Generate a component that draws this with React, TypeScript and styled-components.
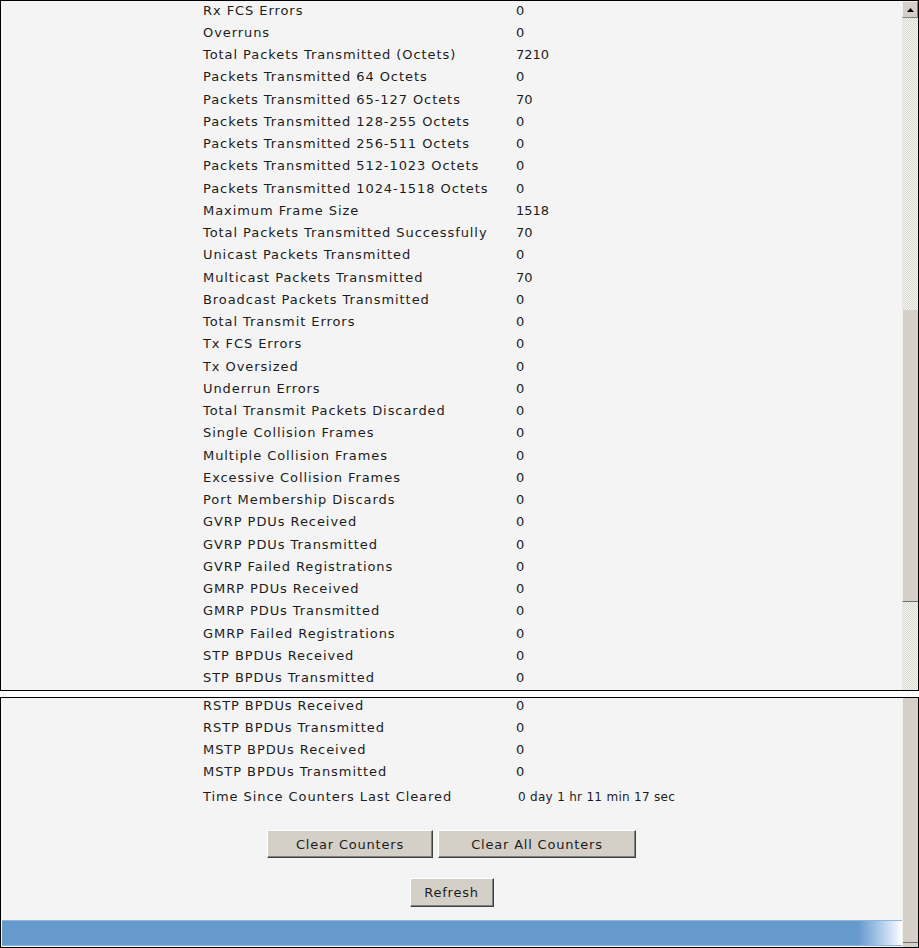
import styled, { createGlobalStyle } from "styled-components";

const GlobalStyle = createGlobalStyle`
  html, body {
    margin: 0;
    padding: 0;
    background: #ffffff;
  }
  body {
    font-family: "DejaVu Sans", Verdana, sans-serif;
    font-size: 13px;
    color: #1c1c1c;
  }
`;

const Page = styled.div`
  width: 919px;
  height: 948px;
  display: flex;
  flex-direction: column;
  gap: 6px;
  overflow: hidden;
`;

const Frame = styled.div<{ $height: number }>`
  height: ${(p) => p.$height}px;
  box-sizing: border-box;
  border: 1px solid #000;
  background: #f4f4f4;
  display: flex;
  flex-direction: row;
  overflow: hidden;
`;

const Viewport = styled.div<{ $offset: number }>`
  flex: 1;
  overflow: hidden;
  display: flex;
  flex-direction: column;
  & > :first-child {
    margin-top: ${(p) => p.$offset}px;
  }
`;

const Row = styled.div<{ $h?: number }>`
  display: grid;
  grid-template-columns: 313px 1fr;
  padding-left: 202px;
  height: ${(p) => p.$h ?? 22.25}px;
  flex-shrink: 0;
  align-items: center;
  white-space: nowrap;
`;

const Label = styled.span`
  font-size: 13px;
  letter-spacing: 0.93px;
`;

const Value = styled.span<{ $small?: boolean }>`
  font-size: ${(p) => (p.$small ? "12px" : "13px")};
  letter-spacing: ${(p) => (p.$small ? "0.3px" : "0")};
  padding-left: ${(p) => (p.$small ? "2px" : "0")};
`;

const ScrollTrack = styled.div`
  width: 16px;
  flex-shrink: 0;
  display: flex;
  flex-direction: column;
  background: repeating-conic-gradient(#d9d6d0 0 25%, #f7f7f5 0 50%) 0 0 / 2px 2px;
`;

const ArrowButton = styled.div`
  height: 17px;
  box-sizing: border-box;
  background: #d4d0c8;
  border-top: 1px solid #f0efeb;
  border-left: 1px solid #f0efeb;
  border-right: 1px solid #808080;
  border-bottom: 1px solid #808080;
  display: flex;
  align-items: center;
  justify-content: center;
`;

const Thumb = styled.div<{ $top: number; $height: number }>`
  margin-top: ${(p) => p.$top}px;
  height: ${(p) => p.$height}px;
  box-sizing: border-box;
  background: #d4d0c8;
  border-left: 1px solid #f0efeb;
  border-bottom: 1px solid #6f6f6f;
`;

const GrayColumn = styled.div`
  width: 16px;
  flex-shrink: 0;
  box-sizing: border-box;
  background: #d4d0c8;
  border-left: 1px solid #f0efeb;
  display: flex;
  flex-direction: column;
`;

const ColumnEnd = styled.div`
  margin-top: auto;
  margin-bottom: 4px;
  height: 1px;
  background: #6f6f6f;
`;

const ButtonRow = styled.div<{ $top: number }>`
  display: flex;
  justify-content: center;
  gap: 5px;
  margin-top: ${(p) => p.$top}px;
  flex-shrink: 0;
`;

const Button = styled.button<{ $w: number; $h?: number }>`
  width: ${(p) => p.$w}px;
  height: ${(p) => p.$h ?? 28}px;
  font-family: "DejaVu Sans", Verdana, sans-serif;
  font-size: 13px;
  letter-spacing: 0.8px;
  color: #1c1c1c;
  background: #d4d0c8;
  border-top: 1px solid #ffffff;
  border-left: 1px solid #ffffff;
  border-right: 1px solid #404040;
  border-bottom: 1px solid #404040;
  box-shadow: inset -1px -1px 0 #808080;
  padding: 0;
  cursor: pointer;
`;

const BlueBar = styled.div`
  margin-top: auto;
  margin-bottom: 1px;
  margin-left: 1px;
  height: 26px;
  flex-shrink: 0;
  box-sizing: border-box;
  border-top: 1px solid #8db5de;
  border-bottom: 1px solid #8db5de;
  background: linear-gradient(
    to right,
    #6699cc 0,
    #6699cc calc(100% - 44px),
    #9dc0e4 calc(100% - 26px),
    #e6f0fa calc(100% - 6px),
    #ffffff 100%
  );
`;

const topRows: [string, string][] = [
  ["Rx FCS Errors", "0"],
  ["Overruns", "0"],
  ["Total Packets Transmitted (Octets)", "7210"],
  ["Packets Transmitted 64 Octets", "0"],
  ["Packets Transmitted 65-127 Octets", "70"],
  ["Packets Transmitted 128-255 Octets", "0"],
  ["Packets Transmitted 256-511 Octets", "0"],
  ["Packets Transmitted 512-1023 Octets", "0"],
  ["Packets Transmitted 1024-1518 Octets", "0"],
  ["Maximum Frame Size", "1518"],
  ["Total Packets Transmitted Successfully", "70"],
  ["Unicast Packets Transmitted", "0"],
  ["Multicast Packets Transmitted", "70"],
  ["Broadcast Packets Transmitted", "0"],
  ["Total Transmit Errors", "0"],
  ["Tx FCS Errors", "0"],
  ["Tx Oversized", "0"],
  ["Underrun Errors", "0"],
  ["Total Transmit Packets Discarded", "0"],
  ["Single Collision Frames", "0"],
  ["Multiple Collision Frames", "0"],
  ["Excessive Collision Frames", "0"],
  ["Port Membership Discards", "0"],
  ["GVRP PDUs Received", "0"],
  ["GVRP PDUs Transmitted", "0"],
  ["GVRP Failed Registrations", "0"],
  ["GMRP PDUs Received", "0"],
  ["GMRP PDUs Transmitted", "0"],
  ["GMRP Failed Registrations", "0"],
  ["STP BPDUs Received", "0"],
  ["STP BPDUs Transmitted", "0"],
];

const bottomRows: [string, string][] = [
  ["RSTP BPDUs Received", "0"],
  ["RSTP BPDUs Transmitted", "0"],
  ["MSTP BPDUs Received", "0"],
  ["MSTP BPDUs Transmitted", "0"],
];

export default function App() {
  return (
    <>
      <GlobalStyle />
      <Page>
        <Frame $height={691}>
          <Viewport $offset={-2}>
            {topRows.map(([label, value]) => (
              <Row key={label}>
                <Label>{label}</Label>
                <Value>{value}</Value>
              </Row>
            ))}
          </Viewport>
          <ScrollTrack>
            <ArrowButton>
              <svg width="7" height="4" viewBox="0 0 7 4">
                <path d="M3.5 0 L7 4 L0 4 Z" fill="#000" />
              </svg>
            </ArrowButton>
            <Thumb $top={292} $height={292} />
          </ScrollTrack>
        </Frame>
        <Frame $height={251}>
          <Viewport $offset={-4}>
            {bottomRows.map(([label, value]) => (
              <Row key={label}>
                <Label>{label}</Label>
                <Value>{value}</Value>
              </Row>
            ))}
            <Row $h={27}>
              <Label>Time Since Counters Last Cleared</Label>
              <Value $small>0 day 1 hr 11 min 17 sec</Value>
            </Row>
            <ButtonRow $top={20}>
              <Button $w={166}>Clear Counters</Button>
              <Button $w={198}>Clear All Counters</Button>
            </ButtonRow>
            <ButtonRow $top={20}>
              <Button $w={84} $h={29}>
                Refresh
              </Button>
            </ButtonRow>
            <BlueBar />
          </Viewport>
          <GrayColumn>
            <ColumnEnd />
          </GrayColumn>
        </Frame>
      </Page>
    </>
  );
}
